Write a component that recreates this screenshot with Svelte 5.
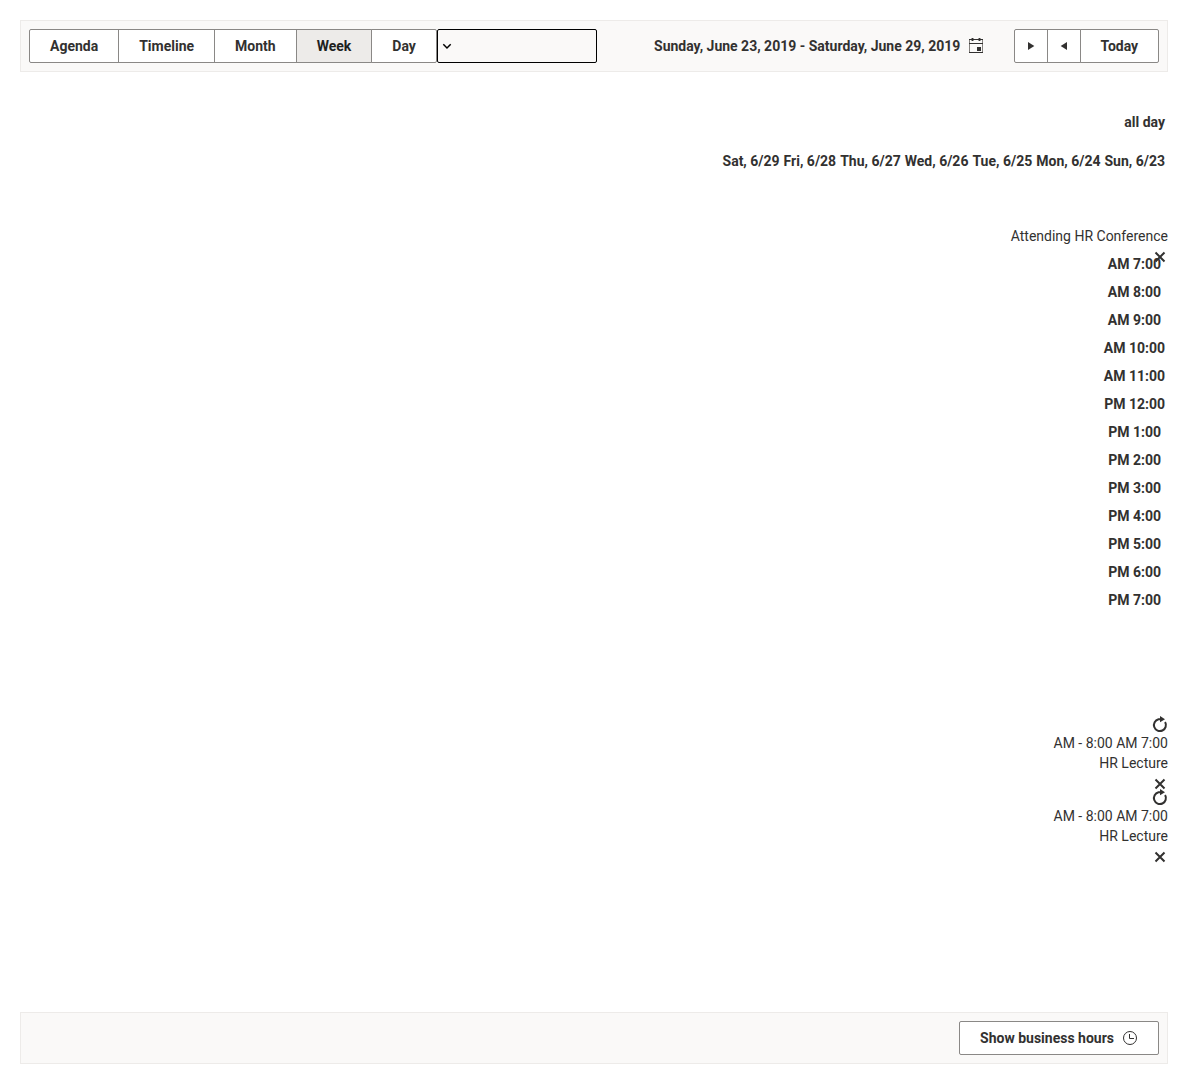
<script>
  const views = ['Agenda', 'Timeline', 'Month', 'Week', 'Day'];
  const hours = ['AM 7:00', 'AM 8:00', 'AM 9:00', 'AM 10:00', 'AM 11:00', 'PM 12:00', 'PM 1:00', 'PM 2:00', 'PM 3:00', 'PM 4:00', 'PM 5:00', 'PM 6:00', 'PM 7:00'];
  const days = ['Sat, 6/29', 'Fri, 6/28', 'Thu, 6/27', 'Wed, 6/26', 'Tue, 6/25', 'Mon, 6/24', 'Sun, 6/23'];
  const lectures = [1, 2];
</script>

{#snippet closeIcon()}
  <svg class="icon" viewBox="0 0 16 16"><path d="M3.5 3.5l9 9M12.5 3.5l-9 9" stroke="currentColor" stroke-width="2" fill="none" /></svg>
{/snippet}

<div class="scheduler">
  <header class="toolbar">
    <div class="group">
      {#each views as view}
        <button class:selected={view === 'Week'}>{view}</button>
      {/each}
    </div>
    <div class="picker">
      <svg class="icon" viewBox="0 0 16 16"><path d="M4.3 6.3L8 10l3.7-3.7" stroke="#000" stroke-width="1.5" fill="none" /></svg>
    </div>
    <div class="range">
      <span>Sunday, June 23, 2019 - Saturday, June 29, 2019</span>
      <svg class="icon" viewBox="0 0 16 16" fill="none" stroke="currentColor">
        <path d="M1.5 1.5V14.5M14.5 1.5V14.5" stroke="#85827f" />
        <path d="M1 1.5H15M1 5.5H15M1 14.5H15" />
        <path d="M4.5 0V3M11.5 0V3" stroke-width="1.9" />
        <path d="M9 9h4v4H9z" fill="currentColor" stroke="none" />
      </svg>
    </div>
    <div class="group">
      <button class="arrow" aria-label="Next"><svg class="icon" viewBox="0 0 16 16"><path d="M5 4l6.3 4L5 12z" fill="currentColor" /></svg></button>
      <button class="arrow" aria-label="Previous"><svg class="icon" viewBox="0 0 16 16"><path d="M11 4L4.7 8l6.3 4z" fill="currentColor" /></svg></button>
      <button class="today">Today</button>
    </div>
  </header>

  <main>
    <div class="all-day">all day</div>
    <div class="days">
      {#each days as day}<span>{day}</span>{/each}
    </div>
    <div class="event">Attending HR Conference<span class="close">{@render closeIcon()}</span></div>
    <div class="hours">
      {#each hours as hour}
        <div class:short={hour.length === 7}>{hour}</div>
      {/each}
    </div>
    <div class="lectures">
      {#each lectures as lecture (lecture)}
        <div class="lecture">
          <svg class="icon" viewBox="0 0 16 16">
            <path d="M13.1 5A6 6 0 1 1 6.5 2.2H8" stroke="currentColor" stroke-width="2" fill="none" />
            <path d="M8-1L13 2.2L8 5.3z" fill="currentColor" />
          </svg>
          <div>AM - 8:00 AM 7:00</div>
          <div>HR Lecture</div>
          <span class="close">{@render closeIcon()}</span>
        </div>
      {/each}
    </div>
  </main>

  <footer class="toolbar">
    <button class="business">Show business hours
      <svg class="icon" viewBox="0 0 16 16" fill="none" stroke="currentColor"><circle cx="8" cy="8" r="6.5" /><path d="M7.5 4v4.5H12" /></svg>
    </button>
  </footer>
</div>

<style>
  :global(body) { margin: 0; background: #fff; }
  .scheduler {
    box-sizing: border-box;
    width: 1188px;
    height: 1084px;
    padding: 20px;
    display: flex;
    flex-direction: column;
    font: 14px/20px Roboto, sans-serif;
    color: #323130;
  }
  .toolbar {
    box-sizing: border-box;
    height: 52px;
    flex: none;
    display: flex;
    align-items: center;
    padding: 0 8px;
    border: 1px solid #edebe9;
    background: #faf9f8;
  }
  .icon { display: block; flex: none; width: 16px; height: 16px; overflow: visible; }
  .group { display: flex; }
  button {
    box-sizing: border-box;
    height: 34px;
    padding: 0 20px;
    border: 1px solid #8a8886;
    background: #fff;
    color: #323130;
    font: 700 14px/20px Roboto, sans-serif;
    white-space: nowrap;
  }
  .group button + button { margin-left: -1px; }
  .group button:first-child { border-radius: 2px 0 0 2px; }
  .group button:last-child { border-radius: 0 2px 2px 0; }
  .selected { background: #edebe9; color: #201f1e; }
  .picker {
    box-sizing: border-box;
    width: 160px;
    height: 34px;
    display: flex;
    align-items: center;
    padding-left: 1px;
    border: 1px solid #000;
    border-radius: 2px;
  }
  .range { display: flex; align-items: center; gap: 8px; margin: 0 29.3px 0 auto; font-weight: 700; }
  .group .arrow { width: 34px; padding: 0 8px; }
  .group .today { width: 79.4px; padding: 0; }
  main { flex: 1; text-align: right; }
  .all-day { margin-top: 40px; padding-right: 3px; font-weight: 700; }
  .days { display: flex; justify-content: flex-end; gap: 4px; margin-top: 19px; padding-right: 3px; font-weight: 700; }
  .event { position: relative; margin-top: 55px; }
  .event .close { position: absolute; right: 0; top: 23px; }
  .hours { margin-top: 4px; font-weight: 700; }
  .hours div { padding: 4px 3px 4px 0; }
  .hours .short { padding-right: 7px; }
  .lectures { margin-top: 103px; }
  .lecture { height: 73px; display: flex; flex-direction: column; align-items: flex-end; }
  .lecture .close { margin-top: 3px; }
  footer { justify-content: flex-end; }
  .business { display: flex; align-items: center; gap: 8px; border-radius: 2px; }
</style>
